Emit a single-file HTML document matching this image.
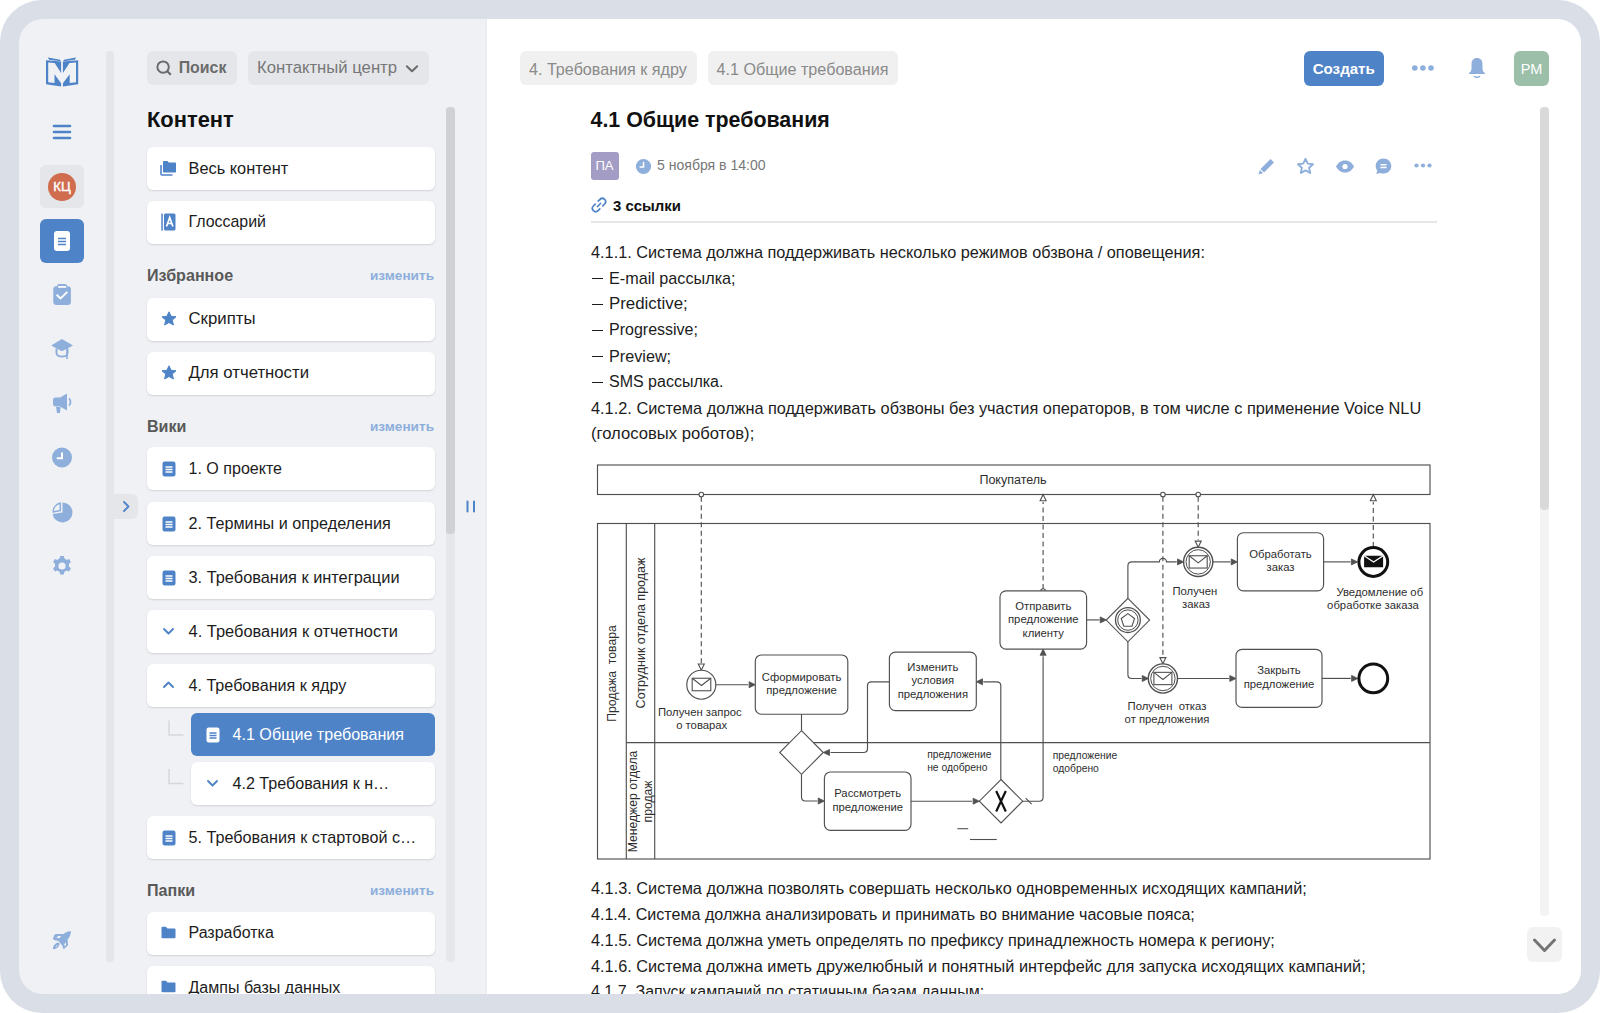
<!DOCTYPE html>
<html><head><meta charset="utf-8"><style>
html,body{margin:0;padding:0;width:1600px;height:1013px;overflow:hidden;background:#ffffff;}
body{font-family:'Liberation Sans',sans-serif;}
#frame{position:absolute;left:0;top:0;width:1600px;height:1013px;background:#d9dee7;border-radius:42px;}
#clip{position:absolute;left:0;top:0;width:1600px;height:1013px;clip-path:inset(19px 19px 19px 19px round 24px);background:#eff1f5;}
#mainbg{position:absolute;left:487px;top:0;width:1113px;height:1013px;background:#ffffff;box-shadow:-1px 0 2px rgba(0,0,0,0.03);}
svg{display:block;}
</style></head><body>
<div id="frame"></div>
<div id="clip">
<div id="mainbg"></div>
<svg style="position:absolute;left:40px;top:50px" width="45" height="45" viewBox="0 0 45 45">
<path fill="#4f83c7" fill-rule="evenodd" d="M6,10.2 L21.1,11.4 L21.1,36.6 L6,34.3 Z M8.2,12.5 L14.7,13 L21.1,23 L21.1,33.2 L14.5,24.2 L14.5,33 L8.2,32.3 Z"/>
<path fill="#4f83c7" fill-rule="evenodd" d="M38.2,10.2 L22.9,11.4 L22.9,36.6 L38.2,34.3 Z M36,12.5 L29.5,13 L22.9,23 L22.9,33.2 L29.7,24.2 L29.7,33 L36,32.3 Z"/>
<path stroke="#4f83c7" stroke-width="1.1" fill="none" d="M8,8 L20,10.3 M24,10.3 L36,8 M9,9.2 L20.5,10.8 M23.5,10.8 L35,9.2"/>
</svg>
<svg style="position:absolute;left:52px;top:123px" width="20" height="18" viewBox="0 0 20 18"><path stroke="#4f83c7" stroke-width="2.6" stroke-linecap="round" d="M2,3 H18 M2,9 H18 M2,15 H18"/></svg>
<div style="position:absolute;left:40px;top:165px;width:44px;height:43px;background:#e4e6ea;border-radius:6px;"></div>
<div style="position:absolute;left:48px;top:172.5px;width:28px;height:28px;border-radius:50%;background:#cf6d4e;color:#fff;font-size:13.2px;font-weight:normal;line-height:28px;text-align:center;-webkit-text-stroke:0.4px #fff">КЦ</div>
<div style="position:absolute;left:40px;top:219px;width:44px;height:44px;background:#4f83c7;border-radius:6px;"></div>
<svg style="position:absolute;left:53px;top:230px" width="18" height="22" viewBox="0 0 18 22"><rect x="1" y="1" width="16" height="20" rx="3" fill="#fff"/><path stroke="#4f83c7" stroke-width="1.6" d="M5,8.5 H13 M5,11.5 H13 M5,14.5 H13"/></svg>
<svg style="position:absolute;left:52px;top:283px" width="20" height="24" viewBox="0 0 20 24"><rect x="1.3" y="3.3" width="17.6" height="18.6" rx="3" fill="#8eaedb"/><rect x="5" y="1" width="10.2" height="5" rx="2.4" fill="#8eaedb"/><rect x="6.2" y="3" width="8" height="1.8" fill="#fff"/><path d="M5.2,12.2 L8.6,15.4 L14.8,9.4" stroke="#fff" stroke-width="2" fill="none" stroke-linecap="round" stroke-linejoin="round"/></svg>
<svg style="position:absolute;left:50px;top:337px" width="24" height="24" viewBox="0 0 24 24"><path d="M1.2,8.5 L11.9,1.9 L23,8.5 L11.9,14.3 Z" fill="#8eaedb"/><path d="M6.5,11.5 V16 C6.5,18.2 9,19.6 12,19.6 C15,19.6 17.5,18.2 17.5,16 V11.5" stroke="#8eaedb" stroke-width="2" fill="none"/><path d="M17,10 V22" stroke="#8eaedb" stroke-width="1.6"/></svg>
<svg style="position:absolute;left:51px;top:391px" width="22" height="24" viewBox="0 0 22 24"><path d="M2,9 C2,7.5 3,6.5 4.5,6.5 H9 L16,2.5 V19.5 L9,15.5 H4.5 C3,15.5 2,14.5 2,13 Z" fill="#8eaedb"/><path d="M5,16 H9.5 L9,22 H6 Z" fill="#8eaedb"/><path d="M18.5,8 C19.8,9.5 19.8,12.5 18.5,14" stroke="#8eaedb" stroke-width="1.8" fill="none" stroke-linecap="round"/></svg>
<svg style="position:absolute;left:51px;top:447px" width="22" height="22" viewBox="0 0 22 22"><circle cx="11" cy="10.5" r="10" fill="#8eaedb"/><path d="M11,5.5 V11.2 H5.8" stroke="#fff" stroke-width="2" fill="none" stroke-linecap="butt"/></svg>
<svg style="position:absolute;left:51px;top:501px" width="22" height="22" viewBox="0 0 22 22"><path d="M11.5,11.5 L11.5,1.5 A10,10 0 1 1 1.6,12.9 Z" fill="#8eaedb"/><path d="M9.3,2 V9.6 L2.2,11 A9.5,9.5 0 0 1 9.3,2 Z" fill="none" stroke="#8eaedb" stroke-width="1.5" stroke-linejoin="round"/></svg>
<svg style="position:absolute;left:51px;top:555px" width="22" height="22" viewBox="0 0 22 22"><path d="M9.2,1 h3.6 l0.6,2.6 a8,8 0 0 1 2.2,1.3 l2.5,-0.9 1.8,3.1 -2,1.8 a8,8 0 0 1 0,2.6 l2,1.8 -1.8,3.1 -2.5,-0.9 a8,8 0 0 1 -2.2,1.3 l-0.6,2.6 h-3.6 l-0.6,-2.6 a8,8 0 0 1 -2.2,-1.3 l-2.5,0.9 -1.8,-3.1 2,-1.8 a8,8 0 0 1 0,-2.6 l-2,-1.8 1.8,-3.1 2.5,0.9 a8,8 0 0 1 2.2,-1.3 Z" fill="#8eaedb"/><circle cx="11" cy="11" r="3.6" fill="#eff1f5"/></svg>
<svg style="position:absolute;left:48px;top:925px" width="28" height="30" viewBox="0 0 28 30"><path fill-rule="evenodd" fill="#8eaedb" d="M22.8,6.2 C20,6 17.5,7.3 15.5,9 L8.5,9 C7.6,9 7,9.4 6.3,10 L5,13.2 C5,14.3 5.5,14.8 6.5,15 L10.5,16 L14.6,21 L15,23.3 C15.3,24 16,24 16.5,23.6 L19.6,20.8 C20,20.4 20.1,20 20,19.4 L19.6,14.6 C21.2,12.8 22.6,10 23,7 Z M8.2,13 L10.2,11 L13.2,11 L11.3,13.3 Z M16.2,19.2 L18,17.2 L17.9,20.3 L16.6,21.2 Z"/><path fill-rule="evenodd" fill="#8eaedb" d="M5,24.2 C4.9,21 7.3,18 10.5,17.6 C12,18.4 11.7,20.2 10.2,21.9 C8.6,23.4 7,24.1 5,24.2 Z M7.4,21.9 C7.9,20.9 8.9,20.1 9.8,19.9 C9.6,20.9 8.8,21.6 7.4,21.9 Z"/></svg>
<div style="position:absolute;left:106px;top:51px;width:8px;height:911px;background:#e4e6ea;border-radius:4px;"></div>
<div style="position:absolute;left:114px;top:494px;width:24px;height:25px;background:#e4e6ea;border-radius:0 6px 6px 0px;"></div>
<svg style="position:absolute;left:120px;top:500px" width="12" height="13" viewBox="0 0 12 13"><path d="M4,2 L8.5,6.5 L4,11" stroke="#4f83c7" stroke-width="1.8" fill="none" stroke-linecap="round" stroke-linejoin="round"/></svg>
<div style="position:absolute;left:147px;top:51px;width:90px;height:34px;background:#e4e6ea;border-radius:6px;"></div>
<svg style="position:absolute;left:155px;top:58px" width="20" height="20" viewBox="0 0 20 20"><circle cx="8.1" cy="9.1" r="5.7" stroke="#6b6b6b" stroke-width="2" fill="none"/><path d="M12.3,13.3 L15.8,16.8" stroke="#6b6b6b" stroke-width="2.2" stroke-linecap="butt"/></svg>
<div style="position:absolute;top:58.16px;font-size:15.9px;line-height:20.67px;color:#6b6b6b;font-weight:bold;white-space:nowrap;left:178.7px;">Поиск</div>
<div style="position:absolute;left:248px;top:51px;width:181px;height:34px;background:#e4e6ea;border-radius:6px;"></div>
<div style="position:absolute;top:57.36px;font-size:16.7px;line-height:21.71px;color:#777777;font-weight:normal;white-space:nowrap;left:257px;">Контактный центр</div>
<svg style="position:absolute;left:404.5px;top:62.5px" width="14" height="12" viewBox="0 0 14 12"><path d="M1.8,3.2 L7,8.2 L12.2,3.2" stroke="#6b6b6b" stroke-width="2" fill="none" stroke-linecap="round" stroke-linejoin="round"/></svg>
<div style="position:absolute;top:105.68px;font-size:21.9px;line-height:28.47px;color:#111111;font-weight:bold;white-space:nowrap;left:147px;">Контент</div>
<div style="position:absolute;left:147px;top:147px;width:288px;height:43px;background:#ffffff;border-radius:6px;box-shadow:0 1px 2px rgba(0,0,0,0.13);"></div>
<svg style="position:absolute;left:160px;top:160px" width="17" height="16" viewBox="0 0 17 16"><path d="M1,5 V14 C1,14.6 1.4,15 2,15 H12.5" stroke="#4f83c7" stroke-width="1.6" fill="none"/><path d="M3,2 C3,1.4 3.4,1 4,1 H7.5 L8.8,2.5 H15 C15.6,2.5 16,2.9 16,3.5 V11.5 C16,12.1 15.6,12.5 15,12.5 H4 C3.4,12.5 3,12.1 3,11.5 Z" fill="#4f83c7"/></svg>
<div style="position:absolute;top:157.68px;font-size:16.38px;line-height:21.29px;color:#1c1c1c;font-weight:normal;white-space:nowrap;left:188.5px;">Весь контент</div>
<div style="position:absolute;left:147px;top:201px;width:288px;height:43px;background:#ffffff;border-radius:6px;box-shadow:0 1px 2px rgba(0,0,0,0.13);"></div>
<svg style="position:absolute;left:161px;top:213px" width="15" height="18" viewBox="0 0 15 18"><rect x="0.3" y="0.6" width="1.5" height="17" fill="#4f83c7"/><rect x="3" y="0.6" width="11.5" height="17" rx="1.5" fill="#4f83c7"/><path d="M5.5,13.5 L8.7,4.5 L11.9,13.5 M6.6,10.5 H10.8" stroke="#fff" stroke-width="1.7" fill="none"/></svg>
<div style="position:absolute;top:212.13px;font-size:15.93px;line-height:20.71px;color:#1c1c1c;font-weight:normal;white-space:nowrap;left:188.5px;">Глоссарий</div>
<div style="position:absolute;top:264.96px;font-size:16.1px;line-height:20.93px;color:#595959;font-weight:bold;white-space:nowrap;left:147px;">Избранное</div>
<div style="position:absolute;top:267.45px;font-size:13.6px;line-height:17.68px;color:#8eaedb;font-weight:bold;white-space:nowrap;right:1166px;">изменить</div>
<div style="position:absolute;left:147px;top:298px;width:288px;height:43px;background:#ffffff;border-radius:6px;box-shadow:0 1px 2px rgba(0,0,0,0.13);"></div>
<svg style="position:absolute;left:160.5px;top:311px" width="16" height="16" viewBox="0 0 16 16"><path d="M8,0.8 L10.1,5.3 L15,5.8 L11.3,9.1 L12.4,14 L8,11.5 L3.6,14 L4.7,9.1 L1,5.8 L5.9,5.3 Z" fill="#4f83c7" stroke="#4f83c7" stroke-width="1" stroke-linejoin="round"/></svg>
<div style="position:absolute;top:308.28px;font-size:16.78px;line-height:21.81px;color:#1c1c1c;font-weight:normal;white-space:nowrap;left:188.5px;">Скрипты</div>
<div style="position:absolute;left:147px;top:352px;width:288px;height:43px;background:#ffffff;border-radius:6px;box-shadow:0 1px 2px rgba(0,0,0,0.13);"></div>
<svg style="position:absolute;left:160.5px;top:365px" width="16" height="16" viewBox="0 0 16 16"><path d="M8,0.8 L10.1,5.3 L15,5.8 L11.3,9.1 L12.4,14 L8,11.5 L3.6,14 L4.7,9.1 L1,5.8 L5.9,5.3 Z" fill="#4f83c7" stroke="#4f83c7" stroke-width="1" stroke-linejoin="round"/></svg>
<div style="position:absolute;top:362.32px;font-size:16.74px;line-height:21.76px;color:#1c1c1c;font-weight:normal;white-space:nowrap;left:188.5px;">Для отчетности</div>
<div style="position:absolute;top:415.96px;font-size:16.1px;line-height:20.93px;color:#595959;font-weight:bold;white-space:nowrap;left:147px;">Вики</div>
<div style="position:absolute;top:418.45px;font-size:13.6px;line-height:17.68px;color:#8eaedb;font-weight:bold;white-space:nowrap;right:1166px;">изменить</div>
<div style="position:absolute;left:147px;top:447px;width:288px;height:43px;background:#ffffff;border-radius:6px;box-shadow:0 1px 2px rgba(0,0,0,0.13);"></div>
<svg style="position:absolute;left:161.5px;top:460.5px" width="14" height="16" viewBox="0 0 14 16"><rect x="0.5" y="0.5" width="13" height="15" rx="2.2" fill="#4f83c7"/><path stroke="#fff" stroke-width="1.3" d="M3.5,6 H10.5 M3.5,8.5 H10.5 M3.5,11 H10.5"/></svg>
<div style="position:absolute;top:458.00px;font-size:16.06px;line-height:20.88px;color:#1c1c1c;font-weight:normal;white-space:nowrap;left:188.5px;">1. О проекте</div>
<div style="position:absolute;left:147px;top:502px;width:288px;height:43px;background:#ffffff;border-radius:6px;box-shadow:0 1px 2px rgba(0,0,0,0.13);"></div>
<svg style="position:absolute;left:161.5px;top:515.5px" width="14" height="16" viewBox="0 0 14 16"><rect x="0.5" y="0.5" width="13" height="15" rx="2.2" fill="#4f83c7"/><path stroke="#fff" stroke-width="1.3" d="M3.5,6 H10.5 M3.5,8.5 H10.5 M3.5,11 H10.5"/></svg>
<div style="position:absolute;top:512.87px;font-size:16.19px;line-height:21.05px;color:#1c1c1c;font-weight:normal;white-space:nowrap;left:188.5px;">2. Термины и определения</div>
<div style="position:absolute;left:147px;top:556px;width:288px;height:43px;background:#ffffff;border-radius:6px;box-shadow:0 1px 2px rgba(0,0,0,0.13);"></div>
<svg style="position:absolute;left:161.5px;top:569.5px" width="14" height="16" viewBox="0 0 14 16"><rect x="0.5" y="0.5" width="13" height="15" rx="2.2" fill="#4f83c7"/><path stroke="#fff" stroke-width="1.3" d="M3.5,6 H10.5 M3.5,8.5 H10.5 M3.5,11 H10.5"/></svg>
<div style="position:absolute;top:566.68px;font-size:16.38px;line-height:21.29px;color:#1c1c1c;font-weight:normal;white-space:nowrap;left:188.5px;">3. Требования к интеграции</div>
<div style="position:absolute;left:147px;top:610px;width:288px;height:43px;background:#ffffff;border-radius:6px;box-shadow:0 1px 2px rgba(0,0,0,0.13);"></div>
<svg style="position:absolute;left:161.5px;top:626px" width="13" height="10" viewBox="0 0 13 10"><path d="M2,3 L6.5,7.5 L11,3" stroke="#4f83c7" stroke-width="1.9" fill="none" stroke-linecap="round" stroke-linejoin="round"/></svg>
<div style="position:absolute;top:620.62px;font-size:16.44px;line-height:21.37px;color:#1c1c1c;font-weight:normal;white-space:nowrap;left:188.5px;">4. Требования к отчетности</div>
<div style="position:absolute;left:147px;top:664px;width:288px;height:43px;background:#ffffff;border-radius:6px;box-shadow:0 1px 2px rgba(0,0,0,0.13);"></div>
<svg style="position:absolute;left:161.5px;top:680px" width="13" height="10" viewBox="0 0 13 10"><path d="M2,7 L6.5,2.5 L11,7" stroke="#4f83c7" stroke-width="1.9" fill="none" stroke-linecap="round" stroke-linejoin="round"/></svg>
<div style="position:absolute;top:674.92px;font-size:16.14px;line-height:20.98px;color:#1c1c1c;font-weight:normal;white-space:nowrap;left:188.5px;">4. Требования к ядру</div>
<svg style="position:absolute;left:165px;top:718px" width="22" height="70" viewBox="0 0 22 70"><path d="M4,2.5 V17 H18.5 M4,51 V65.5 H18.5" stroke="#d6d7da" stroke-width="1.5" fill="none"/></svg>
<div style="position:absolute;left:191px;top:713px;width:244px;height:43px;background:#4f83c7;border-radius:6px;"></div>
<svg style="position:absolute;left:205.5px;top:726.5px" width="14" height="16" viewBox="0 0 14 16"><rect x="0.5" y="0.5" width="13" height="15" rx="2.2" fill="#ffffff"/><path stroke="#4f83c7" stroke-width="1.3" d="M3.5,6 H10.5 M3.5,8.5 H10.5 M3.5,11 H10.5"/></svg>
<div style="position:absolute;top:723.93px;font-size:16.12px;line-height:20.96px;color:#ffffff;font-weight:normal;white-space:nowrap;left:232.5px;">4.1 Общие требования</div>
<div style="position:absolute;left:191px;top:762px;width:244px;height:43px;background:#ffffff;border-radius:6px;box-shadow:0 1px 2px rgba(0,0,0,0.13);"></div>
<svg style="position:absolute;left:206px;top:778px" width="13" height="10" viewBox="0 0 13 10"><path d="M2,3 L6.5,7.5 L11,3" stroke="#4f83c7" stroke-width="1.9" fill="none" stroke-linecap="round" stroke-linejoin="round"/></svg>
<div style="position:absolute;top:772.93px;font-size:16.12px;line-height:20.96px;color:#1c1c1c;font-weight:normal;white-space:nowrap;left:232.5px;">4.2 Требования к н…</div>
<div style="position:absolute;left:147px;top:816px;width:288px;height:43px;background:#ffffff;border-radius:6px;box-shadow:0 1px 2px rgba(0,0,0,0.13);"></div>
<svg style="position:absolute;left:161.5px;top:829.5px" width="14" height="16" viewBox="0 0 14 16"><rect x="0.5" y="0.5" width="13" height="15" rx="2.2" fill="#4f83c7"/><path stroke="#fff" stroke-width="1.3" d="M3.5,6 H10.5 M3.5,8.5 H10.5 M3.5,11 H10.5"/></svg>
<div style="position:absolute;top:826.87px;font-size:16.19px;line-height:21.05px;color:#1c1c1c;font-weight:normal;white-space:nowrap;left:188.5px;">5. Требования к стартовой с…</div>
<div style="position:absolute;top:879.96px;font-size:16.1px;line-height:20.93px;color:#595959;font-weight:bold;white-space:nowrap;left:147px;">Папки</div>
<div style="position:absolute;top:882.45px;font-size:13.6px;line-height:17.68px;color:#8eaedb;font-weight:bold;white-space:nowrap;right:1166px;">изменить</div>
<div style="position:absolute;left:147px;top:912px;width:288px;height:43px;background:#ffffff;border-radius:6px;box-shadow:0 1px 2px rgba(0,0,0,0.13);"></div>
<svg style="position:absolute;left:161px;top:926px" width="15" height="13" viewBox="0 0 15 13"><path d="M0.5,2 C0.5,1.2 1,0.8 1.6,0.8 H5 L6.5,2.5 H13.5 C14.1,2.5 14.5,2.9 14.5,3.5 V11.5 C14.5,12 14.1,12.3 13.5,12.3 H1.5 C0.9,12.3 0.5,12 0.5,11.5 Z" fill="#4f83c7"/></svg>
<div style="position:absolute;top:923.06px;font-size:16.0px;line-height:20.8px;color:#1c1c1c;font-weight:normal;white-space:nowrap;left:188.5px;">Разработка</div>
<div style="position:absolute;left:147px;top:966px;width:288px;height:43px;background:#ffffff;border-radius:6px;box-shadow:0 1px 2px rgba(0,0,0,0.13);"></div>
<svg style="position:absolute;left:161px;top:980px" width="15" height="13" viewBox="0 0 15 13"><path d="M0.5,2 C0.5,1.2 1,0.8 1.6,0.8 H5 L6.5,2.5 H13.5 C14.1,2.5 14.5,2.9 14.5,3.5 V11.5 C14.5,12 14.1,12.3 13.5,12.3 H1.5 C0.9,12.3 0.5,12 0.5,11.5 Z" fill="#4f83c7"/></svg>
<div style="position:absolute;top:977.00px;font-size:16.05px;line-height:20.87px;color:#1c1c1c;font-weight:normal;white-space:nowrap;left:188.5px;">Дампы базы данных</div>
<div style="position:absolute;left:446px;top:107px;width:9px;height:855px;background:#e6e7ea;border-radius:4px;"></div>
<div style="position:absolute;left:446px;top:107px;width:9px;height:427px;background:#d0d1d4;border-radius:4px;"></div>
<svg style="position:absolute;left:464px;top:499px" width="14" height="15" viewBox="0 0 14 15"><path d="M3.5,2.5 V12.5 M10,2.5 V12.5" stroke="#4f83c7" stroke-width="2" stroke-linecap="round"/></svg>

<div style="position:absolute;left:520px;top:51px;width:177px;height:34px;background:#f0f0f0;border-radius:6px;"></div>
<div style="position:absolute;top:58.92px;font-size:16.14px;line-height:20.98px;color:#8a8a8a;font-weight:normal;white-space:nowrap;left:529px;">4. Требования к ядру</div>
<div style="position:absolute;left:708px;top:51px;width:190px;height:34px;background:#f0f0f0;border-radius:6px;"></div>
<div style="position:absolute;top:58.91px;font-size:16.15px;line-height:20.99px;color:#8a8a8a;font-weight:normal;white-space:nowrap;left:716.5px;">4.1 Общие требования</div>
<div style="position:absolute;left:1303.5px;top:51px;width:80.5px;height:34.5px;background:#4f83c7;border-radius:6px;"></div>
<div style="position:absolute;top:58.95px;font-size:15.1px;line-height:19.63px;color:#ffffff;font-weight:bold;white-space:nowrap;left:1043.75px;width:600px;text-align:center;">Создать</div>
<svg style="position:absolute;left:1410px;top:63px" width="26" height="10" viewBox="0 0 26 10"><circle cx="4.8" cy="5" r="2.8" fill="#8eaedb"/><circle cx="12.9" cy="5" r="2.8" fill="#8eaedb"/><circle cx="21" cy="5" r="2.8" fill="#8eaedb"/></svg>
<svg style="position:absolute;left:1466px;top:57px" width="22" height="22" viewBox="0 0 22 22"><path d="M11,1 C7.5,1 5.5,3.5 5.5,7 V11.5 C5.5,13.5 4.5,15 3,16 C2.8,16.4 3,17 3.5,17 H18.5 C19,17 19.2,16.4 19,16 C17.5,15 16.5,13.5 16.5,11.5 V7 C16.5,3.5 14.5,1 11,1 Z" fill="#8eaedb"/><path d="M8.5,19.5 C9.5,20.6 12.5,20.6 13.5,19.5" stroke="#8eaedb" stroke-width="1.6" fill="none" stroke-linecap="round"/></svg>
<div style="position:absolute;left:1514px;top:51px;width:35px;height:35px;background:#9bbfa9;border-radius:6px;"></div>
<div style="position:absolute;top:59.55px;font-size:14.5px;line-height:18.85px;color:#ffffff;font-weight:normal;white-space:nowrap;left:1231.5px;width:600px;text-align:center;">РМ</div>
<div style="position:absolute;left:1540px;top:107px;width:9px;height:809px;background:#f3f3f3;border-radius:4px;"></div>
<div style="position:absolute;left:1540px;top:107px;width:9px;height:403px;background:#d9d9d9;border-radius:4px;"></div>
<div style="position:absolute;left:1527px;top:927px;width:35px;height:35px;background:#f2f2f2;border-radius:6px;"></div>
<svg style="position:absolute;left:1532px;top:933px" width="25" height="23" viewBox="0 0 25 23"><path d="M2.5,7 L12.5,17.5 L22.5,7" stroke="#757575" stroke-width="3" fill="none" stroke-linecap="round" stroke-linejoin="round"/></svg>
<div style="position:absolute;top:107.27px;font-size:21.4px;line-height:27.82px;color:#111111;font-weight:bold;white-space:nowrap;left:590.5px;">4.1 Общие требования</div>
<div style="position:absolute;left:590.5px;top:152px;width:28.0px;height:28px;background:#a39cc4;border-radius:3px;"></div>
<div style="position:absolute;top:157.25px;font-size:13.1px;line-height:17.03px;color:#ffffff;font-weight:normal;white-space:nowrap;left:304.5px;width:600px;text-align:center;">ПА</div>
<svg style="position:absolute;left:635px;top:158px" width="17" height="17" viewBox="0 0 17 17"><circle cx="8.5" cy="8.5" r="7.6" fill="#8eaedb"/><path d="M8.5,4.5 V9 H5.2" stroke="#fff" stroke-width="1.6" fill="none" stroke-linecap="round"/></svg>
<div style="position:absolute;top:156.10px;font-size:14.05px;line-height:18.27px;color:#777777;font-weight:normal;white-space:nowrap;left:657px;">5 ноября в 14:00</div>
<svg style="position:absolute;left:1257px;top:157px" width="19" height="19" viewBox="0 0 19 19"><path d="M13.5,2 L17,5.5 L7,15.5 L3.5,12 Z" fill="#8eaedb"/><path d="M2.8,13 L6,16.2 L1.5,17.5 Z" fill="#8eaedb"/></svg>
<svg style="position:absolute;left:1296px;top:157px" width="19" height="19" viewBox="0 0 19 19"><path d="M9.5,1.8 L11.8,6.6 L17,7.2 L13.1,10.8 L14.2,16 L9.5,13.4 L4.8,16 L5.9,10.8 L2,7.2 L7.2,6.6 Z" fill="none" stroke="#8eaedb" stroke-width="1.9" stroke-linejoin="round"/></svg>
<svg style="position:absolute;left:1335px;top:157px" width="20" height="19" viewBox="0 0 20 19"><path d="M1,9.5 C3.5,5 6.5,3.5 10,3.5 C13.5,3.5 16.5,5 19,9.5 C16.5,14 13.5,15.5 10,15.5 C6.5,15.5 3.5,14 1,9.5 Z" fill="#8eaedb"/><circle cx="10" cy="9.5" r="2.6" fill="#fff"/></svg>
<svg style="position:absolute;left:1374px;top:157px" width="19" height="19" viewBox="0 0 19 19"><path d="M9.5,1.5 C13.9,1.5 17.3,4.8 17.3,9 C17.3,13.2 13.9,16.5 9.5,16.5 C8.4,16.5 7.3,16.3 6.3,15.9 L2.3,17 L3.3,13.6 C2.3,12.3 1.7,10.7 1.7,9 C1.7,4.8 5.1,1.5 9.5,1.5 Z" fill="#8eaedb"/><path d="M6.5,7.8 H12.5 M6.5,10.5 H12.5" stroke="#fff" stroke-width="1.5"/></svg>
<svg style="position:absolute;left:1413px;top:161px" width="20" height="9" viewBox="0 0 20 9"><circle cx="3.5" cy="4.5" r="2.1" fill="#8eaedb"/><circle cx="10" cy="4.5" r="2.1" fill="#8eaedb"/><circle cx="16.5" cy="4.5" r="2.1" fill="#8eaedb"/></svg>
<svg style="position:absolute;left:590px;top:196px" width="18" height="18" viewBox="0 0 18 18"><path d="M7.5,10.5 L10.5,7.5 M8.2,5.2 L10,3.4 C11.3,2.1 13.3,2.1 14.6,3.4 C15.9,4.7 15.9,6.7 14.6,8 L12.8,9.8 M9.8,12.8 L8,14.6 C6.7,15.9 4.7,15.9 3.4,14.6 C2.1,13.3 2.1,11.3 3.4,10 L5.2,8.2" stroke="#4f83c7" stroke-width="1.7" fill="none" stroke-linecap="round"/></svg>
<div style="position:absolute;top:195.70px;font-size:14.95px;line-height:19.43px;color:#111111;font-weight:bold;white-space:nowrap;left:613px;">3 ссылки</div>
<div style="position:absolute;left:590.5px;top:221px;width:846.5px;height:2px;background:#e6e6e6;border-radius:0px;"></div>
<div style="position:absolute;top:241.57px;font-size:16.29px;line-height:21.18px;color:#1c1c1c;font-weight:normal;white-space:nowrap;left:591px;">4.1.1. Система должна поддерживать несколько режимов обзвона / оповещения:</div>
<div style="position:absolute;left:591.7px;top:278.2px;width:10.899999999999977px;height:1.3000000000000114px;background:#1c1c1c;border-radius:0px;"></div>
<div style="position:absolute;top:267.67px;font-size:16.19px;line-height:21.05px;color:#1c1c1c;font-weight:normal;white-space:nowrap;left:609px;">E-mail рассылка;</div>
<div style="position:absolute;left:591.7px;top:304.2px;width:10.899999999999977px;height:1.3000000000000114px;background:#1c1c1c;border-radius:0px;"></div>
<div style="position:absolute;top:293.00px;font-size:16.86px;line-height:21.92px;color:#1c1c1c;font-weight:normal;white-space:nowrap;left:609px;">Predictive;</div>
<div style="position:absolute;left:591.7px;top:330.2px;width:10.899999999999977px;height:1.3000000000000114px;background:#1c1c1c;border-radius:0px;"></div>
<div style="position:absolute;top:319.86px;font-size:16.0px;line-height:20.8px;color:#1c1c1c;font-weight:normal;white-space:nowrap;left:609px;">Progressive;</div>
<div style="position:absolute;left:591.7px;top:356.2px;width:10.899999999999977px;height:1.3000000000000114px;background:#1c1c1c;border-radius:0px;"></div>
<div style="position:absolute;top:345.67px;font-size:16.19px;line-height:21.05px;color:#1c1c1c;font-weight:normal;white-space:nowrap;left:609px;">Preview;</div>
<div style="position:absolute;left:591.7px;top:382.2px;width:10.899999999999977px;height:1.3000000000000114px;background:#1c1c1c;border-radius:0px;"></div>
<div style="position:absolute;top:371.86px;font-size:16.0px;line-height:20.8px;color:#1c1c1c;font-weight:normal;white-space:nowrap;left:609px;">SMS рассылка.</div>
<div style="position:absolute;top:397.52px;font-size:16.34px;line-height:21.24px;color:#1c1c1c;font-weight:normal;white-space:nowrap;left:591px;">4.1.2. Система должна поддерживать обзвоны без участия операторов, в том числе с применение Voice NLU</div>
<div style="position:absolute;top:423.22px;font-size:16.64px;line-height:21.63px;color:#1c1c1c;font-weight:normal;white-space:nowrap;left:591px;">(голосовых роботов);</div>
<div style="position:absolute;top:878.05px;font-size:16.31px;line-height:21.2px;color:#1c1c1c;font-weight:normal;white-space:nowrap;left:591px;">4.1.3. Система должна позволять совершать несколько одновременных исходящих кампаний;</div>
<div style="position:absolute;top:904.11px;font-size:16.09px;line-height:20.92px;color:#1c1c1c;font-weight:normal;white-space:nowrap;left:591px;">4.1.4. Система должна анализировать и принимать во внимание часовые пояса;</div>
<div style="position:absolute;top:929.76px;font-size:16.3px;line-height:21.19px;color:#1c1c1c;font-weight:normal;white-space:nowrap;left:591px;">4.1.5. Система должна уметь определять по префиксу принадлежность номера к региону;</div>
<div style="position:absolute;top:955.63px;font-size:16.28px;line-height:21.16px;color:#1c1c1c;font-weight:normal;white-space:nowrap;left:591px;">4.1.6. Система должна иметь дружелюбный и понятный интерфейс для запуска исходящих кампаний;</div>
<div style="position:absolute;top:981.76px;font-size:16.0px;line-height:20.8px;color:#1c1c1c;font-weight:normal;white-space:nowrap;left:591px;">4.1.7. Запуск кампаний по статичным базам данным:</div>

<svg style="position:absolute;left:0;top:0" width="1600" height="1013" viewBox="0 0 1600 1013" font-family="Liberation Sans, sans-serif">
<rect x="597.5" y="465" width="832.5" height="29.5" fill="#fff" stroke="#505050" stroke-width="1.15"/>
<text x="1013" y="483.5" font-size="12.5" text-anchor="middle" fill="#2e2e2e">Покупатель</text>
<rect x="597.5" y="523.5" width="832.5" height="335.5" fill="#fff" stroke="#505050" stroke-width="1.15"/>
<path d="M626.3,523.5 V859" fill="none" stroke="#505050" stroke-width="1.15"/>
<path d="M654.7,523.5 V859" fill="none" stroke="#505050" stroke-width="1.15"/>
<path d="M626.3,742.6 H1430" fill="none" stroke="#505050" stroke-width="1.15"/>
<text x="616" y="673.5" font-size="12.2" text-anchor="middle" fill="#2e2e2e" transform="rotate(-90 616 673.5)">Продажа&#160; товара</text>
<text x="644.5" y="633" font-size="12.5" text-anchor="middle" fill="#2e2e2e" transform="rotate(-90 644.5 633)">Сотрудник отдела продаж</text>
<text x="636.5" y="801.5" font-size="12.2" text-anchor="middle" fill="#2e2e2e" transform="rotate(-90 636.5 801.5)">Менеджер отдела</text>
<text x="652" y="801.5" font-size="12.2" text-anchor="middle" fill="#2e2e2e" transform="rotate(-90 652 801.5)">продаж</text>
<path d="M701.3,496.8 V663" fill="none" stroke="#505050" stroke-width="1.15" stroke-dasharray="5,3.5"/>
<circle cx="701.3" cy="494.5" r="2.3" fill="#fff" stroke="#505050" stroke-width="1.1"/>
<polygon points="701.30,670.20 698.30,664.00 704.30,664.00" fill="#fff" stroke="#505050" stroke-width="1.1"/>
<path d="M1043.1,589 V502" fill="none" stroke="#505050" stroke-width="1.15" stroke-dasharray="5,3.5"/>
<circle cx="1043.1" cy="591" r="2.3" fill="#fff" stroke="#505050" stroke-width="1.1"/>
<polygon points="1043.10,494.50 1040.10,500.70 1046.10,500.70" fill="#fff" stroke="#505050" stroke-width="1.1"/>
<path d="M1162.9,496.8 V656" fill="none" stroke="#505050" stroke-width="1.15" stroke-dasharray="5,3.5"/>
<circle cx="1162.9" cy="494.5" r="2.3" fill="#fff" stroke="#505050" stroke-width="1.1"/>
<polygon points="1162.90,663.80 1159.90,657.60 1165.90,657.60" fill="#fff" stroke="#505050" stroke-width="1.1"/>
<path d="M1198.2,496.8 V540" fill="none" stroke="#505050" stroke-width="1.15" stroke-dasharray="5,3.5"/>
<circle cx="1198.2" cy="494.5" r="2.3" fill="#fff" stroke="#505050" stroke-width="1.1"/>
<polygon points="1198.20,547.30 1195.20,541.10 1201.20,541.10" fill="#fff" stroke="#505050" stroke-width="1.1"/>
<path d="M1373.3,547 V502" fill="none" stroke="#505050" stroke-width="1.15" stroke-dasharray="5,3.5"/>
<polygon points="1373.30,494.50 1370.30,500.70 1376.30,500.70" fill="#fff" stroke="#505050" stroke-width="1.1"/>
<circle cx="701.3" cy="684.7" r="14.5" fill="#fff" stroke="#505050" stroke-width="1.15"/>
<rect x="692.2" y="678.25" width="18.6" height="12.5" fill="#fff" stroke="#505050" stroke-width="1.1"/>
<path d="M692.2,678.25 L701.5,685.5 L710.8000000000001,678.25" fill="none" stroke="#505050" stroke-width="1.1"/>
<text x="699.8" y="715.7" font-size="11.3" text-anchor="middle" fill="#2e2e2e">Получен запрос</text>
<text x="701.7" y="729.2" font-size="11.3" text-anchor="middle" fill="#2e2e2e">о товарах</text>
<path d="M715.8,684.7 H748" fill="none" stroke="#505050" stroke-width="1.15"/>
<polygon points="755.30,684.70 749.10,681.70 749.10,687.70" fill="#505050" stroke="#505050" stroke-width="0.8"/>
<rect x="755.3" y="655" width="92.5" height="59.200000000000045" rx="6" fill="#fff" stroke="#505050" stroke-width="1.15"/>
<text x="801.55" y="681.3" font-size="11.3" text-anchor="middle" fill="#2e2e2e">Сформировать</text>
<text x="801.55" y="694.2" font-size="11.3" text-anchor="middle" fill="#2e2e2e">предложение</text>
<path d="M801.5,714.2 V731" fill="none" stroke="#505050" stroke-width="1.15"/>
<polygon points="801.5,730.7 823.3,752.5 801.5,774.3 779.7,752.5" fill="#fff" stroke="#505050" stroke-width="1.1"/>
<path d="M889.4,681.8 H871.5 Q867.5,681.8 867.5,685.8 V748.5 Q867.5,752.5 863.5,752.5 H830.5" fill="none" stroke="#505050" stroke-width="1.15"/>
<polygon points="823.30,752.50 829.50,749.50 829.50,755.50" fill="#505050" stroke="#505050" stroke-width="0.8"/>
<path d="M801.5,774.3 V797 Q801.5,801 805.5,801 H817.4" fill="none" stroke="#505050" stroke-width="1.15"/>
<polygon points="824.40,801.00 818.20,798.00 818.20,804.00" fill="#505050" stroke="#505050" stroke-width="0.8"/>
<rect x="824.4" y="772" width="86.60000000000002" height="58.299999999999955" rx="6" fill="#fff" stroke="#505050" stroke-width="1.15"/>
<text x="867.7" y="797.3" font-size="11.3" text-anchor="middle" fill="#2e2e2e">Рассмотреть</text>
<text x="867.7" y="810.8" font-size="11.3" text-anchor="middle" fill="#2e2e2e">предложение</text>
<path d="M911,801.2 H972" fill="none" stroke="#505050" stroke-width="1.15"/>
<polygon points="979.30,801.20 973.10,798.20 973.10,804.20" fill="#505050" stroke="#505050" stroke-width="0.8"/>
<polygon points="1001,779.5 1022.7,801.2 1001,822.9000000000001 979.3,801.2" fill="#fff" stroke="#505050" stroke-width="1.1"/>
<path d="M996.2,791 L1005.8,811.5 M1005.8,791 L996.2,811.5" stroke="#111" stroke-width="2.2" fill="none"/>
<path d="M1000.8,779.5 V685.8 Q1000.8,681.8 996.8,681.8 H983.3" fill="none" stroke="#505050" stroke-width="1.15"/>
<polygon points="976.30,681.80 982.50,678.80 982.50,684.80" fill="#505050" stroke="#505050" stroke-width="0.8"/>
<rect x="889.4" y="652.1" width="86.89999999999998" height="58.5" rx="6" fill="#fff" stroke="#505050" stroke-width="1.15"/>
<text x="932.8499999999999" y="670.9" font-size="11.3" text-anchor="middle" fill="#2e2e2e">Изменить</text>
<text x="932.8499999999999" y="684.3" font-size="11.3" text-anchor="middle" fill="#2e2e2e">условия</text>
<text x="932.8499999999999" y="697.6" font-size="11.3" text-anchor="middle" fill="#2e2e2e">предложения</text>
<path d="M1022.7,801.2 H1039.1 Q1043.1,801.2 1043.1,797.2 V656.2" fill="none" stroke="#505050" stroke-width="1.15"/>
<polygon points="1043.10,649.10 1040.10,655.30 1046.10,655.30" fill="#505050" stroke="#505050" stroke-width="0.8"/>
<path d="M1025.7,798.2 L1031.6,804.1" fill="none" stroke="#505050" stroke-width="1.1"/>
<text x="927.2" y="758.1" font-size="10.3" text-anchor="start" fill="#2e2e2e">предложение</text>
<text x="927.2" y="770.6" font-size="10.3" text-anchor="start" fill="#2e2e2e">не одобрено</text>
<text x="1052.8" y="759.2" font-size="10.3" text-anchor="start" fill="#2e2e2e">предложение</text>
<text x="1052.8" y="771.9" font-size="10.3" text-anchor="start" fill="#2e2e2e">одобрено</text>
<path d="M957.4,828.7 H968.2" fill="none" stroke="#505050" stroke-width="1.1"/>
<path d="M969.9,839.5 H996.8" fill="none" stroke="#505050" stroke-width="1.1"/>
<rect x="1000" y="590.8" width="86.59999999999991" height="58.30000000000007" rx="6" fill="#fff" stroke="#505050" stroke-width="1.15"/>
<text x="1043.3" y="609.7" font-size="11.3" text-anchor="middle" fill="#2e2e2e">Отправить</text>
<text x="1043.3" y="623.3" font-size="11.3" text-anchor="middle" fill="#2e2e2e">предложение</text>
<text x="1043.3" y="636.8" font-size="11.3" text-anchor="middle" fill="#2e2e2e">клиенту</text>
<path d="M1086.6,619.9 H1099.4" fill="none" stroke="#505050" stroke-width="1.15"/>
<polygon points="1106.40,619.90 1100.20,616.90 1100.20,622.90" fill="#505050" stroke="#505050" stroke-width="0.8"/>
<polygon points="1127.9,598.4 1149.6000000000001,620.1 1127.9,641.8000000000001 1106.2,620.1" fill="#fff" stroke="#505050" stroke-width="1.1"/>
<circle cx="1127.9" cy="620.1" r="12.4" fill="#fff" stroke="#505050" stroke-width="1.3"/>
<circle cx="1127.9" cy="620.1" r="10.2" fill="#fff" stroke="#505050" stroke-width="1"/>
<polygon points="1127.90,613.60 1134.56,618.44 1132.01,626.26 1123.79,626.26 1121.24,618.44" fill="#fff" stroke="#505050" stroke-width="1.1"/>
<path d="M1127.9,598.5 V565.9 Q1127.9,561.9 1131.9,561.9 H1159.3 A3.6,3.6 0 0 1 1166.5,561.9 H1176.7" fill="none" stroke="#505050" stroke-width="1.15"/>
<polygon points="1183.70,561.90 1177.50,558.90 1177.50,564.90" fill="#505050" stroke="#505050" stroke-width="0.8"/>
<path d="M1127.9,641.8 V674.5 Q1127.9,678.5 1131.9,678.5 H1141.4" fill="none" stroke="#505050" stroke-width="1.15"/>
<polygon points="1148.40,678.50 1142.20,675.50 1142.20,681.50" fill="#505050" stroke="#505050" stroke-width="0.8"/>
<circle cx="1198.2" cy="561.9" r="14.6" fill="#fff" stroke="#505050" stroke-width="1.4"/>
<circle cx="1198.2" cy="561.9" r="12.2" fill="#fff" stroke="#505050" stroke-width="1"/>
<rect x="1189.2" y="555.75" width="18" height="12.3" fill="#fff" stroke="#505050" stroke-width="1.1"/>
<path d="M1189.2,555.75 L1198.2,562.9 L1207.2,555.75" fill="none" stroke="#505050" stroke-width="1.1"/>
<text x="1194.8" y="594.6" font-size="11.3" text-anchor="middle" fill="#2e2e2e">Получен</text>
<text x="1196" y="608" font-size="11.3" text-anchor="middle" fill="#2e2e2e">заказ</text>
<path d="M1212.8,561.9 H1230.4" fill="none" stroke="#505050" stroke-width="1.15"/>
<polygon points="1237.40,561.90 1231.20,558.90 1231.20,564.90" fill="#505050" stroke="#505050" stroke-width="0.8"/>
<rect x="1237.4" y="532.7" width="86.19999999999982" height="58.09999999999991" rx="6" fill="#fff" stroke="#505050" stroke-width="1.15"/>
<text x="1280.5" y="557.5" font-size="11.3" text-anchor="middle" fill="#2e2e2e">Обработать</text>
<text x="1280.5" y="571" font-size="11.3" text-anchor="middle" fill="#2e2e2e">заказ</text>
<path d="M1323.6,561.9 H1350.6" fill="none" stroke="#505050" stroke-width="1.15"/>
<polygon points="1357.60,561.90 1351.40,558.90 1351.40,564.90" fill="#505050" stroke="#505050" stroke-width="0.8"/>
<circle cx="1373.3" cy="562" r="14.4" fill="#fff" stroke="#111" stroke-width="3"/>
<rect x="1364.1" y="555.75" width="19" height="11.5" fill="#111"/>
<path d="M1364.1,555.75 L1373.6,562.0 L1383.1,555.75" fill="none" stroke="#fff" stroke-width="1.3"/>
<text x="1379.8" y="595.5" font-size="11.3" text-anchor="middle" fill="#2e2e2e">Уведомление об</text>
<text x="1373" y="609.1" font-size="11.3" text-anchor="middle" fill="#2e2e2e">обработке заказа</text>
<circle cx="1162.9" cy="678.5" r="14.6" fill="#fff" stroke="#505050" stroke-width="1.4"/>
<circle cx="1162.9" cy="678.5" r="12.2" fill="#fff" stroke="#505050" stroke-width="1"/>
<rect x="1153.9" y="672.35" width="18" height="12.3" fill="#fff" stroke="#505050" stroke-width="1.1"/>
<path d="M1153.9,672.35 L1162.9,679.5 L1171.9,672.35" fill="none" stroke="#505050" stroke-width="1.1"/>
<text x="1167" y="709.8" font-size="11.3" text-anchor="middle" fill="#2e2e2e">Получен&#160; отказ</text>
<text x="1167" y="723.3" font-size="11.3" text-anchor="middle" fill="#2e2e2e">от предложения</text>
<path d="M1177.5,678.5 H1229" fill="none" stroke="#505050" stroke-width="1.15"/>
<polygon points="1236.00,678.50 1229.80,675.50 1229.80,681.50" fill="#505050" stroke="#505050" stroke-width="0.8"/>
<rect x="1236" y="649.4" width="86" height="58.0" rx="6" fill="#fff" stroke="#505050" stroke-width="1.15"/>
<text x="1279.0" y="674.3" font-size="11.3" text-anchor="middle" fill="#2e2e2e">Закрыть</text>
<text x="1279.0" y="687.8" font-size="11.3" text-anchor="middle" fill="#2e2e2e">предложение</text>
<path d="M1322,678.4 H1350.8" fill="none" stroke="#505050" stroke-width="1.15"/>
<polygon points="1357.80,678.40 1351.60,675.40 1351.60,681.40" fill="#505050" stroke="#505050" stroke-width="0.8"/>
<circle cx="1373.3" cy="678.4" r="14.4" fill="#fff" stroke="#111" stroke-width="3"/>
</svg>

</div>
</body></html>
